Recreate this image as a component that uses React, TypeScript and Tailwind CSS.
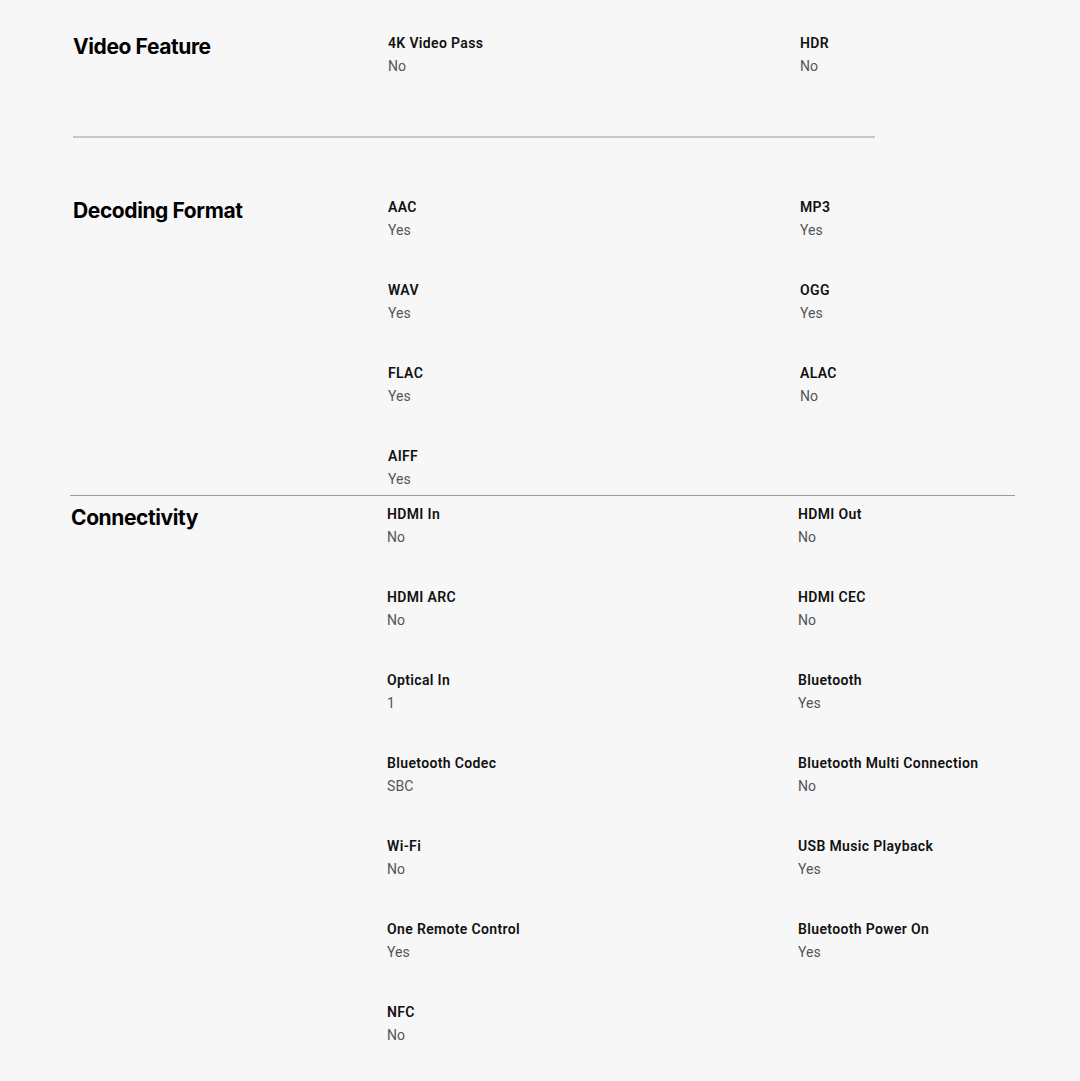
import React from "react";

type Item = { label: string; value: string };

const headingFont = { fontFamily: "Inter, 'DejaVu Sans', sans-serif" };

function Spec({ item }: { item: Item }) {
  return (
    <div className="flex flex-col">
      <div className="text-[14px] leading-[23px] font-semibold text-[#111] tracking-[0.35px]">{item.label}</div>
      <div className="text-[14px] leading-[23px] text-[#555] tracking-[0.1px]">{item.value}</div>
    </div>
  );
}

function Section({
  title,
  items,
  pl,
  hw,
  cols,
  pt,
  pb,
}: {
  title: string;
  items: Item[];
  pl: string;
  hw: string;
  cols: string;
  pt: string;
  pb: string;
}) {
  return (
    <div className={`flex ${pl} ${pt} ${pb}`}>
      <h3
        className={`${hw} shrink-0 text-[21px] leading-[30px] font-bold text-black tracking-[-0.4px]`}
        style={headingFont}
      >
        {title}
      </h3>
      <div className={`grid ${cols} gap-y-[37px]`}>
        {items.map((it) => (
          <Spec key={it.label} item={it} />
        ))}
      </div>
    </div>
  );
}

export default function App() {
  return (
    <div
      className="min-h-[1081px] w-[1080px] bg-[#f7f7f7] overflow-hidden"
      style={{ fontFamily: "Roboto, 'Open Sans', sans-serif" }}
    >
      <Section
        title="Video Feature"
        pl="pl-[73px]"
        hw="w-[315px]"
        cols="grid-cols-[412px_200px]"
        pt="pt-[32px]"
        pb="pb-[58px]"
        items={[
          { label: "4K Video Pass", value: "No" },
          { label: "HDR", value: "No" },
        ]}
      />
      <div className="ml-[73px] w-[802px] h-[2px] bg-[#c8c8c8]" />
      <Section
        title="Decoding Format"
        pl="pl-[73px]"
        hw="w-[315px]"
        cols="grid-cols-[412px_200px]"
        pt="pt-[58px]"
        pb="pb-[4px]"
        items={[
          { label: "AAC", value: "Yes" },
          { label: "MP3", value: "Yes" },
          { label: "WAV", value: "Yes" },
          { label: "OGG", value: "Yes" },
          { label: "FLAC", value: "Yes" },
          { label: "ALAC", value: "No" },
          { label: "AIFF", value: "Yes" },
        ]}
      />
      <div className="ml-[70px] w-[945px] h-px bg-[#9a9a9a]" />
      <Section
        title="Connectivity"
        pl="pl-[71px]"
        hw="w-[316px]"
        cols="grid-cols-[411px_220px]"
        pt="pt-[7px]"
        pb="pb-[30px]"
        items={[
          { label: "HDMI In", value: "No" },
          { label: "HDMI Out", value: "No" },
          { label: "HDMI ARC", value: "No" },
          { label: "HDMI CEC", value: "No" },
          { label: "Optical In", value: "1" },
          { label: "Bluetooth", value: "Yes" },
          { label: "Bluetooth Codec", value: "SBC" },
          { label: "Bluetooth Multi Connection", value: "No" },
          { label: "Wi-Fi", value: "No" },
          { label: "USB Music Playback", value: "Yes" },
          { label: "One Remote Control", value: "Yes" },
          { label: "Bluetooth Power On", value: "Yes" },
          { label: "NFC", value: "No" },
        ]}
      />
    </div>
  );
}
